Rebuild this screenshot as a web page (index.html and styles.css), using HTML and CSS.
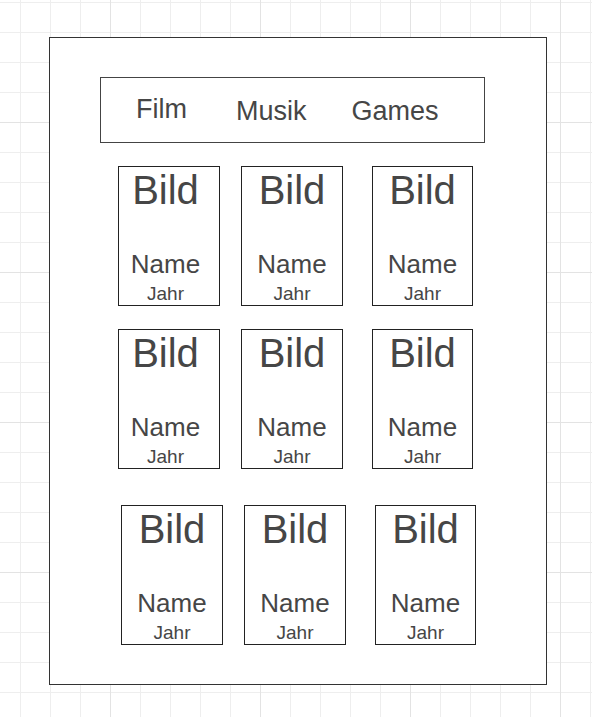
FILE: index.html
```html
<!DOCTYPE html>
<html lang="de">
<head>
<meta charset="utf-8">
<title>Mockup</title>
<link rel="stylesheet" href="styles.css">
</head>
<body>
<div class="canvas">
  <div class="page">
    <nav class="nav">
      <span class="nav-item nav-item-first">Film</span>
      <span class="nav-item nav-item-mid">Musik</span>
      <span class="nav-item">Games</span>
    </nav>
    <div class="row">
      <div class="card card-offset"><span class="bild">Bild</span><span class="name">Name</span><span class="jahr">Jahr</span></div>
      <div class="card"><span class="bild">Bild</span><span class="name">Name</span><span class="jahr">Jahr</span></div>
      <div class="card card-last"><span class="bild">Bild</span><span class="name">Name</span><span class="jahr">Jahr</span></div>
    </div>
    <div class="row row-2">
      <div class="card card-offset"><span class="bild">Bild</span><span class="name">Name</span><span class="jahr">Jahr</span></div>
      <div class="card"><span class="bild">Bild</span><span class="name">Name</span><span class="jahr">Jahr</span></div>
      <div class="card card-last"><span class="bild">Bild</span><span class="name">Name</span><span class="jahr">Jahr</span></div>
    </div>
    <div class="row row-3">
      <div class="card"><span class="bild">Bild</span><span class="name">Name</span><span class="jahr">Jahr</span></div>
      <div class="card"><span class="bild">Bild</span><span class="name">Name</span><span class="jahr">Jahr</span></div>
      <div class="card card-last"><span class="bild">Bild</span><span class="name">Name</span><span class="jahr">Jahr</span></div>
    </div>
  </div>
</div>
</body>
</html>
```
FILE: styles.css
```css
html, body {
  margin: 0;
  padding: 0;
}

body {
  width: 592px;
  height: 717px;
  overflow: hidden;
  font-family: "Liberation Sans", Arial, sans-serif;
  color: #464646;
  background-color: #ffffff;
  background-image:
    linear-gradient(to right, #e3e3e3 1px, transparent 1px),
    linear-gradient(to bottom, #e3e3e3 1px, transparent 1px),
    linear-gradient(to right, #eeeeee 1px, transparent 1px),
    linear-gradient(to bottom, #eeeeee 1px, transparent 1px);
  background-size: 150px 150px, 150px 150px, 30px 30px, 30px 30px;
  background-position: 110px 0, 0 122px, 20px 0, 0 2px;
}

.canvas {
  padding: 37px 0 0 49px;
}

.page {
  box-sizing: border-box;
  width: 498px;
  height: 648px;
  border: 1px solid #333333;
  background: #ffffff;
  display: flex;
  flex-direction: column;
  align-items: flex-start;
}

.nav {
  box-sizing: border-box;
  width: 385px;
  height: 66px;
  margin: 39px 0 0 50px;
  padding-left: 35px;
  border: 1px solid #444444;
  background: #ffffff;
  display: flex;
  align-items: center;
  gap: 45px;
}

.nav-item {
  font-size: 27px;
  line-height: 30px;
  padding-top: 2px;
}

.nav-item-first {
  padding-top: 0;
  padding-bottom: 2px;
}

.nav-item-mid {
  margin-left: 4px;
}

.row {
  display: flex;
  gap: 21px;
  margin: 23px 0 0 68px;
}

.row-2 {
  margin-top: 23px;
}

.row-3 {
  margin-top: 36px;
  margin-left: 71px;
}

.card {
  box-sizing: border-box;
  width: 102px;
  height: 140px;
  border: 1px solid #222222;
  background: #ffffff;
  display: flex;
  flex-direction: column;
  align-items: center;
}

.card-offset {
  padding-right: 7px;
}

.card-last {
  margin-left: 8px;
  width: 101px;
}

.bild {
  font-size: 40px;
  line-height: 44px;
  padding-top: 1px;
}

.name {
  font-size: 26px;
  line-height: 30px;
  margin-top: 37px;
}

.jahr {
  font-size: 19px;
  line-height: 22px;
  margin-top: 4px;
}
```
